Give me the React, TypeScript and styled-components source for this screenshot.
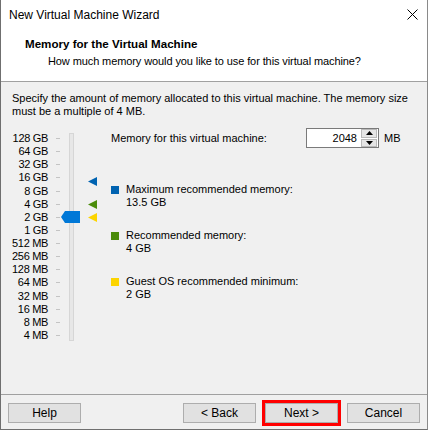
import * as React from "react";
import styled, { createGlobalStyle } from "styled-components";

const GlobalStyle = createGlobalStyle`
  html, body {
    margin: 0;
    padding: 0;
    background: #ffffff;
  }
  body {
    font-family: "Liberation Sans", Arial, sans-serif;
    font-size: 11px;
    color: #000;
  }
`;

const colour = {
  blue: "#0063b1",
  thumb: "#0078d7",
  green: "#4b8c0a",
  yellow: "#fcd400",
  face: "#f0f0f0",
  line: "#a0a0a0",
};

const ROW = 13.125;
const SLIDER_TOP = 4;

const sizes = [
  "128 GB",
  "64 GB",
  "32 GB",
  "16 GB",
  "8 GB",
  "4 GB",
  "2 GB",
  "1 GB",
  "512 MB",
  "256 MB",
  "128 MB",
  "64 MB",
  "32 MB",
  "16 MB",
  "8 MB",
  "4 MB",
];

// index on the scale, 0 = 128 GB, each step halves
const indexFor = (gb: number) => 7 - Math.log2(gb);

const markers = [
  { colour: colour.blue, gb: 13.5 },
  { colour: colour.green, gb: 4 },
  { colour: colour.yellow, gb: 2 },
];

const legend = [
  { colour: colour.blue, title: "Maximum recommended memory:", value: "13.5 GB" },
  { colour: colour.green, title: "Recommended memory:", value: "4 GB" },
  { colour: colour.yellow, title: "Guest OS recommended minimum:", value: "2 GB" },
];

const Dialog = styled.div`
  box-sizing: border-box;
  width: 428px;
  height: 430px;
  display: flex;
  flex-direction: column;
  border-left: 1px solid #6f6f6f;
  border-right: 1px solid #8a8a8a;
  border-bottom: 1px solid #6f6f6f;
  background: #fff;
`;

const TitleBar = styled.div`
  height: 30px;
  display: flex;
  align-items: center;
  justify-content: space-between;
  padding: 0 9px 0 8px;
  font-size: 12px;
`;

const CloseIcon = styled.svg`
  width: 11px;
  height: 11px;
  margin-top: -1px;
`;

const Header = styled.div`
  height: 52px;
  padding: 7px 0 0 24px;
  box-sizing: border-box;
  border-bottom: 1px solid ${colour.line};
`;

const HeaderTitle = styled.div`
  font-weight: bold;
  font-size: 11.6px;
  line-height: 14px;
`;

const HeaderSub = styled.div`
  line-height: 14px;
  margin-top: 3px;
  padding-left: 23px;
  letter-spacing: -0.1px;
`;

const Body = styled.div`
  flex: 1;
  background: ${colour.face};
  padding: 10px 11px 0 11px;
`;

const Intro = styled.p`
  margin: 0;
  line-height: 13px;
`;

const Content = styled.div`
  display: flex;
  margin-top: 10px;
`;

const SliderArea = styled.div`
  position: relative;
  width: 88px;
  height: 210px;
  margin-top: ${SLIDER_TOP}px;
  display: flex;
`;

const Scale = styled.div`
  display: grid;
  grid-template-rows: repeat(16, 1fr);
  width: 48px;
`;

const ScaleRow = styled.div`
  display: flex;
  align-items: center;
  justify-content: flex-end;
  gap: 8px;
  line-height: 13px;
  white-space: nowrap;
  letter-spacing: -0.3px;
`;

const Tick = styled.span`
  flex: none;
  width: 4px;
  height: 1px;
  background: #c4c4c4;
`;

const Track = styled.div`
  box-sizing: border-box;
  width: 5px;
  height: 208px;
  margin: 1px 0 0 9px;
  background: #e7e7e7;
  border: 1px solid #d6d6d6;
`;

const Thumb = styled.svg`
  position: absolute;
  left: 49px;
  width: 19px;
  height: 12px;
`;

const Marker = styled.svg`
  position: absolute;
  left: 76px;
  width: 9px;
  height: 9px;
`;

const Details = styled.div`
  flex: 1;
  margin-left: 11px;
  display: flex;
  flex-direction: column;
`;

const MemoryRow = styled.div`
  display: flex;
  align-items: center;
  height: 20px;
`;

const MemoryLabel = styled.span`
  width: 195px;
`;

const Spinner = styled.div`
  box-sizing: border-box;
  width: 73px;
  height: 20px;
  display: flex;
  background: #fff;
  border: 1px solid #7a7a7a;
`;

const SpinValue = styled.span`
  flex: 1;
  text-align: right;
  padding-right: 4px;
  line-height: 18px;
`;

const SpinButtons = styled.div`
  width: 16px;
  display: flex;
  flex-direction: column;
  gap: 1px;
  padding: 0 1px 0 0;
`;

const SpinButton = styled.div`
  flex: 1;
  display: flex;
  align-items: center;
  justify-content: center;
  background: #e5e5e5;
  border: 1px solid #b9b9b9;
`;

const Unit = styled.span`
  margin-left: 5px;
`;

const Legend = styled.div`
  display: flex;
  flex-direction: column;
  gap: 20px;
  margin-top: 35px;
`;

const LegendItem = styled.div`
  display: grid;
  grid-template-columns: 8px auto;
  column-gap: 7px;
  line-height: 13px;
`;

const Swatch = styled.span<{ $colour: string }>`
  width: 8px;
  height: 8px;
  margin-top: 3px;
  background: ${(p) => p.$colour};
`;

const Value = styled.span`
  grid-column: 2;
`;

const Footer = styled.div`
  display: flex;
  align-items: center;
  height: 35px;
  box-sizing: border-box;
  padding: 8px 7px 6px 7px;
  background: ${colour.face};
  border-top: 1px solid ${colour.line};
`;

const Button = styled.button<{ $highlight?: boolean }>`
  box-sizing: border-box;
  width: 73px;
  height: 20px;
  padding: 0;
  font-family: inherit;
  font-size: 12px;
  color: #000;
  background: #e1e1e1;
  border: 1px solid #adadad;
  outline: ${(p) => (p.$highlight ? "3px solid #ff0000" : "none")};
`;

const ButtonGroup = styled.div`
  margin-left: auto;
  display: flex;
  gap: 9px;
`;

const Arrow = ({ up }: { up?: boolean }) => (
  <svg width="7" height="4" viewBox="0 0 7 4">
    <polygon points={up ? "3.5,0 7,4 0,4" : "0,0 7,0 3.5,4"} fill="#000" />
  </svg>
);

const rowCentre = (index: number) => index * ROW + ROW / 2;

export default function App() {
  return (
    <>
      <GlobalStyle />
      <Dialog>
        <TitleBar>
          <span>New Virtual Machine Wizard</span>
          <CloseIcon viewBox="0 0 11 11">
            <path d="M0.5 0.5 L10.5 10.5 M10.5 0.5 L0.5 10.5" stroke="#000" strokeWidth="1" />
          </CloseIcon>
        </TitleBar>
        <Header>
          <HeaderTitle>Memory for the Virtual Machine</HeaderTitle>
          <HeaderSub>How much memory would you like to use for this virtual machine?</HeaderSub>
        </Header>
        <Body>
          <Intro>
            Specify the amount of memory allocated to this virtual machine. The memory size
            <br />
            must be a multiple of 4 MB.
          </Intro>
          <Content>
            <SliderArea>
              <Scale>
                {sizes.map((size) => (
                  <ScaleRow key={size}>
                    <span>{size}</span>
                    <Tick />
                  </ScaleRow>
                ))}
              </Scale>
              <Track />
              <Thumb viewBox="0 0 19 12" style={{ top: rowCentre(indexFor(2)) - 6 }}>
                <polygon points="0,6 4,0 19,0 19,12 4,12" fill={colour.thumb} />
              </Thumb>
              {markers.map((m) => (
                <Marker
                  key={m.gb}
                  viewBox="0 0 9 9"
                  style={{ top: rowCentre(indexFor(m.gb)) - 4.5 }}
                >
                  <polygon points="0,4.5 9,0 9,9" fill={m.colour} />
                </Marker>
              ))}
            </SliderArea>
            <Details>
              <MemoryRow>
                <MemoryLabel>Memory for this virtual machine:</MemoryLabel>
                <Spinner>
                  <SpinValue>2048</SpinValue>
                  <SpinButtons>
                    <SpinButton>
                      <Arrow up />
                    </SpinButton>
                    <SpinButton>
                      <Arrow />
                    </SpinButton>
                  </SpinButtons>
                </Spinner>
                <Unit>MB</Unit>
              </MemoryRow>
              <Legend>
                {legend.map((item) => (
                  <LegendItem key={item.title}>
                    <Swatch $colour={item.colour} />
                    <span>{item.title}</span>
                    <Value>{item.value}</Value>
                  </LegendItem>
                ))}
              </Legend>
            </Details>
          </Content>
        </Body>
        <Footer>
          <Button>Help</Button>
          <ButtonGroup>
            <Button>&lt; Back</Button>
            <Button $highlight>Next &gt;</Button>
            <Button>Cancel</Button>
          </ButtonGroup>
        </Footer>
      </Dialog>
    </>
  );
}
